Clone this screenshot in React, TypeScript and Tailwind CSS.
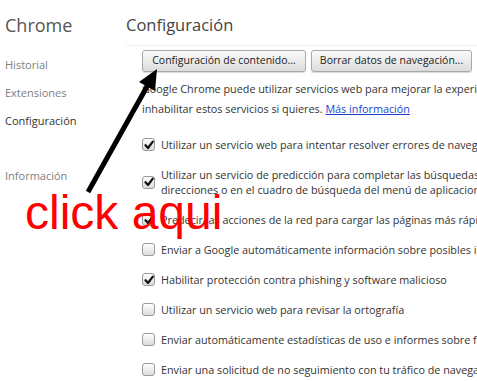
import React from "react";

const font = { fontFamily: '"Open Sans", "Noto Sans", sans-serif' };

type Row = { lines: string[]; checked: boolean };

const rows: Row[] = [
  { lines: ["Utilizar un servicio web para intentar resolver errores de navegación"], checked: true },
  {
    lines: [
      "Utilizar un servicio de predicción para completar las búsquedas y las URL escritas en la barra de",
      "direcciones o en el cuadro de búsqueda del menú de aplicaciones",
    ],
    checked: true,
  },
  { lines: ["Predecir las acciones de la red para cargar las páginas más rápido"], checked: true },
  { lines: ["Enviar a Google automáticamente información sobre posibles incidentes de seguridad"], checked: false },
  { lines: ["Habilitar protección contra phishing y software malicioso"], checked: true },
  { lines: ["Utilizar un servicio web para revisar la ortografía"], checked: false },
  { lines: ["Enviar automáticamente estadísticas de uso e informes sobre fallos a Google"], checked: false },
  { lines: ["Enviar una solicitud de no seguimiento con tu tráfico de navegación"], checked: false },
];

const Checkbox = ({ checked }: { checked: boolean }) => (
  <div className="w-[13px] h-[13px] shrink-0 rounded-[3px] border border-[#9a9a9a] bg-gradient-to-b from-[#ffffff] to-[#dcdcdc] flex items-center justify-center">
    {checked && (
      <svg width="10" height="10" viewBox="0 0 10 10">
        <path d="M1.5 5.2 L4 8 L8.8 1.6" fill="none" stroke="#111" strokeWidth="2.2" strokeLinecap="round" strokeLinejoin="round" />
      </svg>
    )}
  </div>
);

const Button = ({ children, w }: { children: React.ReactNode; w: string }) => (
  <div className={`${w} h-[22px] flex items-center justify-center rounded-[3px] border border-[#a8a8a8] bg-gradient-to-b from-[#fbfbfb] to-[#dcdcdc] shadow-[0_1px_1px_rgba(0,0,0,0.15)] text-[10.5px] text-[#222]`}>
    {children}
  </div>
);

export default function App() {
  return (
    <div className="relative w-[477px] h-[381px] overflow-hidden bg-white flex" style={font}>
      {/* sidebar */}
      <div className="w-[126px] shrink-0 pl-[5px]">
        <div className="h-[46px] pt-[13px] text-[18px] leading-[24px] text-[#555]">Chrome</div>
        <div className="mt-[11px] flex flex-col text-[11px] leading-[16px]">
          <div className="text-[#808080]">Historial</div>
          <div className="mt-[12px] text-[#808080]">Extensiones</div>
          <div className="mt-[12px] text-[#333]">Configuración</div>
          <div className="mt-[39px] text-[#808080]">Información</div>
        </div>
      </div>

      {/* main */}
      <div className="flex-1 min-w-0 overflow-hidden whitespace-nowrap">
        <div className="h-[46px] pt-[13px] border-b border-[#eeeeee] text-[16.5px] leading-[24px] text-[#444]">
          Configuración
        </div>
        <div className="pl-[16px]">
          <div className="mt-[4px] flex gap-[5px]">
            <Button w="w-[164px]">Configuración de contenido...</Button>
            <Button w="w-[161px]">Borrar datos de navegación...</Button>
          </div>
          <div className="mt-[7px] text-[10.8px] leading-[20px] text-[#333]">
            <div>Google Chrome puede utilizar servicios web para mejorar la experiencia de navegación. Puedes</div>
            <div>
              inhabilitar estos servicios si quieres.{" "}
              <span className="text-[#1a3fd0] underline">Más información</span>
            </div>
          </div>
          <div className="mt-[18px] flex flex-col gap-[15px] text-[10.8px] leading-[15px] text-[#333]">
            {rows.map((r, i) => (
              <div key={i} className="flex items-center gap-[6px]">
                <Checkbox checked={r.checked} />
                <div>
                  {r.lines.map((l, j) => (
                    <div key={j}>{l}</div>
                  ))}
                </div>
              </div>
            ))}
          </div>
        </div>
      </div>

      {/* annotation */}
      <svg className="absolute left-0 top-0 pointer-events-none" width="477" height="381">
        <line x1="88" y1="192" x2="149" y2="83" stroke="#000" strokeWidth="5" />
        <polygon points="157,69 139,82 155,91" fill="#000" />
      </svg>
      <div
        className="absolute left-[25px] top-[189px] text-[48px] leading-[48px] text-[#ff0000] whitespace-nowrap"
        style={{ fontFamily: '"Liberation Sans", Arial, sans-serif' }}
      >
        click aqui
      </div>
    </div>
  );
}
